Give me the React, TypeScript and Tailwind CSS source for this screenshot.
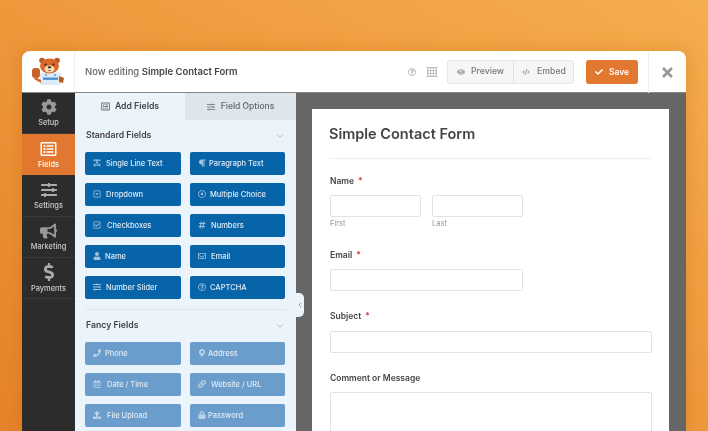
import React from "react";
import { ChevronDown, ChevronLeft } from "lucide-react";
import {
  FaCog, FaSlidersH, FaBullhorn, FaDollarSign, FaRegListAlt, FaTextWidth, FaParagraph, FaRegCaretSquareDown,
  FaRegDotCircle, FaRegCheckSquare, FaHashtag, FaUser, FaRegEnvelope, FaRegQuestionCircle, FaPhone,
  FaMapMarkerAlt, FaRegCalendarAlt, FaLink, FaUpload, FaLock, FaEye, FaCode, FaCheck, FaTimes,
} from "react-icons/fa";

type F = { label: string; Icon: React.ComponentType<{ className?: string }>; gap: string };

const standard: F[] = [
  { label: "Single Line Text", Icon: FaTextWidth, gap: "gap-[5px]" },
  { label: "Paragraph Text", Icon: FaParagraph, gap: "gap-[3px]" },
  { label: "Dropdown", Icon: FaRegCaretSquareDown, gap: "gap-[5px]" },
  { label: "Multiple Choice", Icon: FaRegDotCircle, gap: "gap-[4px]" },
  { label: "Checkboxes", Icon: FaRegCheckSquare, gap: "gap-[6px]" },
  { label: "Numbers", Icon: FaHashtag, gap: "gap-[5px]" },
  { label: "Name", Icon: FaUser, gap: "gap-[4px]" },
  { label: "Email", Icon: FaRegEnvelope, gap: "gap-[5px]" },
  { label: "Number Slider", Icon: FaSlidersH, gap: "gap-[5px]" },
  { label: "CAPTCHA", Icon: FaRegQuestionCircle, gap: "gap-[4px]" },
];
const fancy: F[] = [
  { label: "Phone", Icon: FaPhone, gap: "gap-[4px]" },
  { label: "Address", Icon: FaMapMarkerAlt, gap: "gap-[2px]" },
  { label: "Date / Time", Icon: FaRegCalendarAlt, gap: "gap-[6px]" },
  { label: "Website / URL", Icon: FaLink, gap: "gap-[5px]" },
  { label: "File Upload", Icon: FaUpload, gap: "gap-[6px]" },
  { label: "Password", Icon: FaLock, gap: "gap-[2px]" },
];

function FieldGrid({ items, light }: { items: F[]; light?: boolean }) {
  return (
    <div className="grid grid-cols-[96px_95px] gap-x-[9px] gap-y-[8.3px]">
      {items.map(({ label, Icon, gap }) => (
        <div
          key={label}
          className={`flex h-[22.7px] items-center rounded-[2px] pl-[7px] text-[7.5px] font-medium text-[#dfeaf4] ${gap} ${
            light ? "bg-[#6a9dcb]" : "bg-[#0864a8]"
          }`}
        >
          <span className="flex w-[9px] shrink-0 justify-center opacity-70">
            <Icon className="h-[8px] w-[8px]" />
          </span>
          <span className="whitespace-nowrap">{label}</span>
        </div>
      ))}
    </div>
  );
}

function SectionHead({ title }: { title: string }) {
  return (
    <div className="flex h-[15px] items-center justify-between pl-[1px] pr-[1px]">
      <span className="text-[8.7px] font-semibold text-[#444]">{title}</span>
      <ChevronDown className="h-[10px] w-[10px] text-[#999]" strokeWidth={1.5} />
    </div>
  );
}

function NavItem({ label, icon, active }: { label: string; icon: React.ReactNode; active?: boolean }) {
  return (
    <div
      className={`flex h-[41.2px] flex-col items-center justify-center gap-[3px] border-b border-[#3a3a3a] pt-[1.5px] text-[7.4px] font-medium ${
        active ? "border-b-0 bg-[#e27730] text-white" : "text-[#ccc]"
      }`}
    >
      {icon}
      <span className="leading-[10px]">{label}</span>
    </div>
  );
}

function Label({ text, required = true }: { text: string; required?: boolean }) {
  return (
    <div className="text-[8.5px] font-semibold leading-[12px] text-[#444]">
      {text}
      {required && <span className="ml-[4px] text-[#d63638]">*</span>}
    </div>
  );
}

const inputCls = "block h-[22px] rounded-[2px] border border-[#e2e2e2] bg-white";

function Bear() {
  return (
    <svg viewBox="0 0 36 30" className="h-[30px] w-[36px]">
      <rect x="10" y="15.5" width="21" height="12.5" rx="2" fill="#dcebf7" />
      <rect x="13" y="20.5" width="15" height="2.4" fill="#4a90d0" />
      <circle cx="16" cy="18" r=".9" fill="#4a90d0" />
      <circle cx="25" cy="18" r=".9" fill="#4a90d0" />
      <circle cx="12" cy="3.5" r="2.8" fill="#b85a1e" />
      <circle cx="27" cy="3.5" r="2.8" fill="#b85a1e" />
      <ellipse cx="19.5" cy="9" rx="9.5" ry="7.5" fill="#d9692b" />
      <ellipse cx="19.5" cy="12" rx="5" ry="3.6" fill="#f6dcb8" />
      <circle cx="15.5" cy="7.5" r="1.1" fill="#3a2a20" />
      <circle cx="23.5" cy="7.5" r="1.1" fill="#3a2a20" />
      <ellipse cx="19.5" cy="10.3" rx="1.8" ry="1.1" fill="#3a2a20" />
      <path d="M17.8 13c1 1.4 2.4 1.4 3.4 0" fill="#c0392b" />
      <rect x="2" y="11" width="8" height="10" rx="3" fill="#c9622a" />
      <path d="M5 20l6 3v3l-7-4z" fill="#d9692b" />
      <path d="M29 19l5 2-1 5-4-1z" fill="#b85a1e" />
    </svg>
  );
}

function Dots() {
  const pts = [0, 1, 2, 3];
  return (
    <svg viewBox="0 0 10 10" className="h-[10px] w-[10px]">
      {pts.map((y) => pts.map((x) => <rect key={`${x}${y}`} x={x * 2.8} y={y * 2.8} width="1.6" height="1.6" fill="#999" />))}
    </svg>
  );
}

export default function App() {
  return (
    <div
      className="h-[431px] w-[708px] overflow-hidden bg-gradient-to-tr from-[#e6822a] to-[#f5ae4d] pl-[22px] pt-[51px] blur-[0.35px]"
      style={{ fontFamily: "Inter, 'Liberation Sans', sans-serif" }}
    >
      <div className="flex h-[380px] w-[664px] flex-col overflow-hidden rounded-t-[8px] bg-white shadow-[0_0_18px_rgba(190,100,10,0.35)]">
        {/* header */}
        <div className="flex h-[42px] shrink-0 items-center border-b border-[#888]">
          <div className="flex h-full w-[53px] items-center justify-center border-r border-[#eee]">
            <Bear />
          </div>
          <div className="ml-[10px] whitespace-nowrap pt-[1px] text-[9.5px] font-medium text-[#666]">
            Now editing <span className="font-semibold text-[#444]">Simple Contact Form</span>
          </div>
          <div className="ml-auto flex items-center pt-[1px]">
            <FaRegQuestionCircle className="h-[8px] w-[8px] text-[#aaa]" />
            <span className="ml-[11px] flex"><Dots /></span>
            <div className="ml-[10px] flex h-[24px] w-[127px] items-center rounded-[3px] border border-[#e6e6e6] bg-[#f6f6f6] text-[8.7px] font-medium text-[#777]">
              <div className="flex h-full items-center gap-[6px] border-r border-[#e2e2e2] pl-[9px] pr-[9px]">
                <FaEye className="h-[8px] w-[8px] text-[#999]" />
                Preview
              </div>
              <div className="flex h-full items-center gap-[7px] pl-[8px] pr-[8px]">
                <FaCode className="h-[8px] w-[8px] text-[#aaa]" />
                Embed
              </div>
            </div>
            <div className="ml-[12px] flex h-[24px] w-[52px] items-center justify-center gap-[6px] rounded-[3px] bg-[#e27730] text-[8.5px] font-semibold text-white">
              <FaCheck className="h-[8px] w-[8px]" />
              Save
            </div>
            <div className="ml-[10px] flex h-[41px] w-[38px] items-center justify-center border-l border-[#eee]">
              <FaTimes className="h-[15px] w-[13px] text-[#999]" />
            </div>
          </div>
        </div>

        <div className="flex min-h-0 flex-1">
          {/* sidebar */}
          <div className="w-[53px] shrink-0 bg-[#2c2c2c]">
            <NavItem label="Setup" icon={<FaCog className="h-[16px] w-[16px] text-[#999]" />} />
            <NavItem label="Fields" active icon={<FaRegListAlt className="h-[16px] w-[17px] text-white" />} />
            <NavItem label="Settings" icon={<FaSlidersH className="h-[16px] w-[16px] text-[#aaa]" />} />
            <NavItem label="Marketing" icon={<FaBullhorn className="h-[16px] w-[17px] text-[#999]" />} />
            <NavItem label="Payments" icon={<FaDollarSign className="h-[18px] w-[14px] text-[#aaa]" />} />
          </div>

          {/* panel */}
          <div className="relative w-[221px] shrink-0 bg-[#ebf3fb]">
            <div className="flex h-[27px] text-[8.7px] font-semibold">
              <div className="flex w-[110px] items-center justify-center gap-[5px] text-[#444]">
                <FaRegListAlt className="h-[9px] w-[9px] text-[#777]" />
                Add Fields
              </div>
              <div className="flex flex-1 items-center justify-center gap-[6px] bg-[#dde5ed] text-[8.5px] font-medium text-[#666]">
                <FaSlidersH className="h-[8px] w-[8px] text-[#888]" />
                Field Options
              </div>
            </div>
            <div className="px-[10px] pt-[8px]">
              <SectionHead title="Standard Fields" />
              <div className="mt-[9px]">
                <FieldGrid items={standard} />
              </div>
              <div className="mt-[10.5px] border-t border-[#dfe6ee] pt-[8px]">
                <SectionHead title="Fancy Fields" />
                <div className="mt-[9px]">
                  <FieldGrid items={fancy} light />
                </div>
              </div>
            </div>
            <div className="absolute right-[-8px] top-[200px] flex h-[24px] w-[8px] items-center rounded-r-[5px] bg-[#ebf3fb]">
              <ChevronLeft className="h-[8px] w-[8px] text-[#888]" strokeWidth={2.5} />
            </div>
          </div>

          {/* canvas */}
          <div className="min-w-0 flex-1 bg-[#666] pl-[16px] pr-[17px] pt-[16px]">
            <div className="h-[400px] bg-white px-[17px] pt-[15px]">
              <div className="border-b border-[#eee] pb-[14px] text-[14.5px] font-semibold leading-[20px] text-[#444]">
                Simple Contact Form
              </div>
              <div className="pl-[1px]">
                <div className="mt-[16px]">
                  <Label text="Name" />
                  <div className="mt-[8px] flex gap-[11px]">
                    <div>
                      <div className={`${inputCls} w-[91px]`} />
                      <div className="mt-[2px] text-[7.5px] leading-[10px] text-[#999]">First</div>
                    </div>
                    <div>
                      <div className={`${inputCls} w-[91px]`} />
                      <div className="mt-[2px] text-[7.5px] leading-[10px] text-[#999]">Last</div>
                    </div>
                  </div>
                </div>
                <div className="mt-[20px]">
                  <Label text="Email" />
                  <div className={`${inputCls} mt-[8px] w-[193px]`} />
                </div>
                <div className="mt-[19px]">
                  <Label text="Subject" />
                  <div className={`${inputCls} mt-[9px] w-[322px]`} />
                </div>
                <div className="mt-[19px]">
                  <Label text="Comment or Message" required={false} />
                  <div className="mt-[8px] h-[60px] w-[322px] rounded-[2px] border border-[#e2e2e2] bg-white" />
                </div>
              </div>
            </div>
          </div>
        </div>
      </div>
    </div>
  );
}
